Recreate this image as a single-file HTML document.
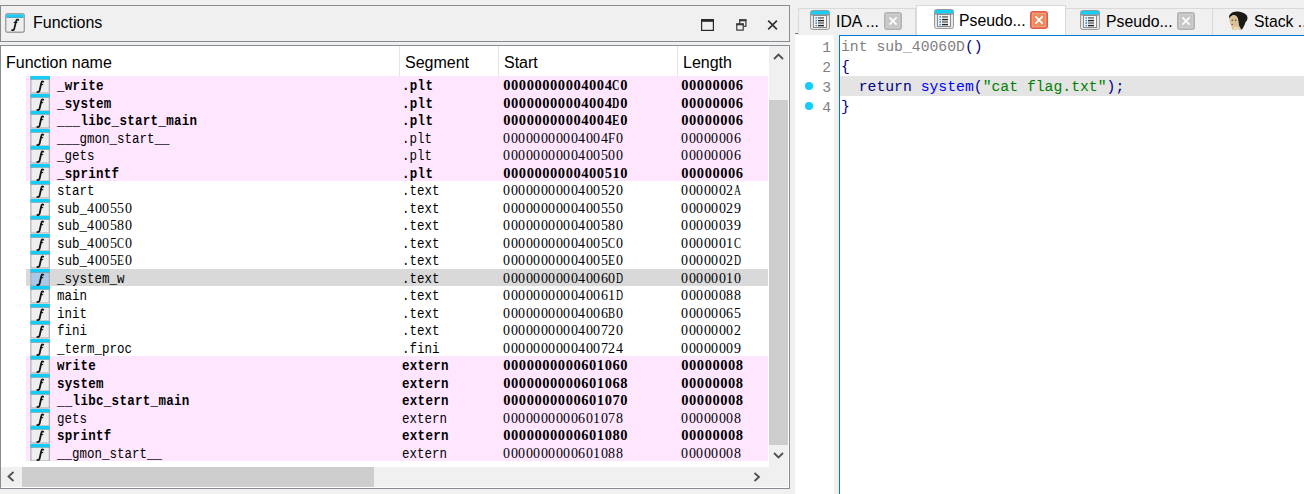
<!DOCTYPE html>
<html><head><meta charset="utf-8">
<style>
*{margin:0;padding:0;box-sizing:border-box}
html,body{width:1304px;height:494px;overflow:hidden;background:#f0f0f0;font-family:"Liberation Sans",sans-serif}
.abs{position:absolute}
#lp{position:absolute;left:0;top:5px;width:790px;height:37px;border:1px solid #878c93;background:#f0f0f0}
#lp .ttl{position:absolute;left:32px;top:8px;font-size:16px;color:#000}
#lst{position:absolute;left:0;top:45px;width:790px;height:444px;border:1px solid #878c93;background:#fff;overflow:hidden}
.hdr{position:absolute;top:0;height:30px;font-size:16px;color:#000;padding-left:5px;line-height:33px}
.sep{position:absolute;top:0;width:1px;height:30px;background:#e5e5e5}
.row{position:absolute;left:26px;width:742px;height:17.5px;font-family:"Liberation Serif",serif;font-size:14.5px;color:#000}
.row i{display:inline-block;width:7.5px;text-align:center;font-style:normal;transform-origin:0 0}
.bd i{width:7.8px}
.row u{display:inline-block;text-decoration:none;font-family:"Liberation Mono",monospace;font-size:12.5px;transform:scaleY(1.1);transform-origin:0 12.5px}
.bd u{letter-spacing:0.3px}
.row span{position:absolute;top:1px;line-height:17.5px;white-space:pre}
.pk{background:#ffe6ff}
.sel{background:#d9d9d9}
.bd{font-weight:bold}

.fi{position:absolute;left:4px;top:0}
.c1{left:31px}.c2{left:376px}.c3{left:477px}.c4{left:655px}
#vs{position:absolute;left:768px;top:0;width:19px;height:415px;background:#f0f0f0}
#hs{position:absolute;left:0;top:421px;width:768px;height:20px;background:#f0f0f0}
#corner{position:absolute;left:768px;top:415px;width:19px;height:26px;background:#f0f0f0}
#rp{position:absolute;left:795px;top:35px;width:509px;height:459px;background:#fff}
#gut{position:absolute;left:0;top:0;width:39px;height:459px;background:#fff}
#gap{position:absolute;left:39px;top:0;width:5px;height:459px;background:#f0f0f0}
#ed{position:absolute;left:44px;top:0;width:465px;height:459px;border:1px solid #0078d7;border-right:none;border-bottom:none;background:#fff}
.ln{position:absolute;right:3px;font-family:"Liberation Mono",monospace;font-size:14.75px;color:#808080;line-height:20px}
.cl{position:absolute;left:1px;margin-top:1px;font-family:"Liberation Mono",monospace;font-size:14.75px;line-height:20px;white-space:pre}
.dot{position:absolute;left:10px;width:8px;height:8px;border-radius:50%;background:#14ccfa}
.tt{font-size:15.75px;color:#000;white-space:nowrap}
.tab{position:absolute;top:8px;height:27px;font-size:15.5px;border:1px solid #d9d9d9;border-bottom:none;background:#f0f0f0}
</style></head><body>
<div id="lp">
  <svg class="abs" style="left:4px;top:7px" width="20" height="20" viewBox="0 0 20 20"><rect x="0.7" y="0.7" width="18.6" height="18.6" rx="2" fill="#eeeeee" stroke="#a0a0a0" stroke-width="1.4"/><rect x="1.4" y="1.4" width="17.2" height="3" fill="#14cdf6"/><rect x="1.4" y="4.4" width="17.2" height="0.6" fill="#2a8aa5"/><path d="M13.4 6.9C12.7 6.2 11.5 6.5 11.1 8.1L9.3 15.6C9 16.9 8.2 17.5 7 17.1" fill="none" stroke="#141414" stroke-width="1.7" stroke-linecap="round"/><path d="M8.7 9.4L12.4 9.4" stroke="#141414" stroke-width="1.1"/></svg>
  <div class="ttl">Functions</div>
  <svg class="abs" style="left:700px;top:12.5px" width="13" height="12" viewBox="0 0 13 12"><rect x="0.6" y="0.6" width="11.8" height="10.8" fill="none" stroke="#2a2a2a" stroke-width="1.2"/><rect x="0" y="0" width="13" height="2.8" fill="#2a2a2a"/></svg>
  <svg class="abs" style="left:735px;top:12.5px" width="11" height="12" viewBox="0 0 11 12"><rect x="3.7" y="0.9" width="6.2" height="6.4" fill="none" stroke="#3a3a3a" stroke-width="1.2"/><rect x="3.1" y="0.3" width="7.4" height="2" fill="#3a3a3a"/><rect x="0.8" y="5" width="6.4" height="6.1" fill="#f0f0f0" stroke="#3a3a3a" stroke-width="1.2"/><rect x="0.2" y="4.4" width="7.6" height="1.9" fill="#3a3a3a"/></svg>
  <svg class="abs" style="left:766px;top:14px" width="11" height="10" viewBox="0 0 11 10"><path d="M1.2 0.6L9.9 9.4M9.9 0.6L1.2 9.4" stroke="#333" stroke-width="1.7"/></svg>
</div>
<div id="lst">
  <div class="hdr" style="left:0;width:399px">Function name</div>
  <div class="sep" style="left:398px"></div>
  <div class="hdr" style="left:399px;width:99px">Segment</div>
  <div class="sep" style="left:497px"></div>
  <div class="hdr" style="left:498px;width:179px">Start</div>
  <div class="sep" style="left:676px"></div>
  <div class="hdr" style="left:677px;width:91px">Length</div>
  <div style="position:absolute;top:-46px;left:-1px">
<div class="row pk bd" style="top:76.0px"><svg class="fi" width="20" height="17.5" viewBox="0 0 20 17.5"><rect x="0.4" y="0" width="19.4" height="17.5" fill="#a4a4a4"/><rect x="1.4" y="3.4" width="17.4" height="13.1" fill="#eeeeee"/><rect x="0.4" y="0" width="19.4" height="3" fill="#14cdf6"/><rect x="0.4" y="3" width="19.4" height="0.5" fill="#3a9ab5"/><path d="M13.2 5.7C12.5 5 11.6 5.4 11.3 7L9.6 14.5C9.3 15.7 8.5 16.4 7.3 16" fill="none" stroke="#141414" stroke-width="1.8" stroke-linecap="round"/><path d="M10.2 8.6L13.2 8.6" stroke="#141414" stroke-width="1.1"/></svg><span class="c1"><u>_write</u></span><span class="c2"><u>.plt</u></span><span class="c3"><i>0</i><i>0</i><i>0</i><i>0</i><i>0</i><i>0</i><i>0</i><i>0</i><i>0</i><i>0</i><i>4</i><i>0</i><i>0</i><i>4</i><i style="transform:scaleX(0.697)">C</i><i>0</i></span><span class="c4"><i>0</i><i>0</i><i>0</i><i>0</i><i>0</i><i>0</i><i>0</i><i>6</i></span></div>
<div class="row pk bd" style="top:93.5px"><svg class="fi" width="20" height="17.5" viewBox="0 0 20 17.5"><rect x="0.4" y="0" width="19.4" height="17.5" fill="#a4a4a4"/><rect x="1.4" y="3.4" width="17.4" height="13.1" fill="#eeeeee"/><rect x="0.4" y="0" width="19.4" height="3" fill="#14cdf6"/><rect x="0.4" y="3" width="19.4" height="0.5" fill="#3a9ab5"/><path d="M13.2 5.7C12.5 5 11.6 5.4 11.3 7L9.6 14.5C9.3 15.7 8.5 16.4 7.3 16" fill="none" stroke="#141414" stroke-width="1.8" stroke-linecap="round"/><path d="M10.2 8.6L13.2 8.6" stroke="#141414" stroke-width="1.1"/></svg><span class="c1"><u>_system</u></span><span class="c2"><u>.plt</u></span><span class="c3"><i>0</i><i>0</i><i>0</i><i>0</i><i>0</i><i>0</i><i>0</i><i>0</i><i>0</i><i>0</i><i>4</i><i>0</i><i>0</i><i>4</i><i style="transform:scaleX(0.697)">D</i><i>0</i></span><span class="c4"><i>0</i><i>0</i><i>0</i><i>0</i><i>0</i><i>0</i><i>0</i><i>6</i></span></div>
<div class="row pk bd" style="top:111.0px"><svg class="fi" width="20" height="17.5" viewBox="0 0 20 17.5"><rect x="0.4" y="0" width="19.4" height="17.5" fill="#a4a4a4"/><rect x="1.4" y="3.4" width="17.4" height="13.1" fill="#eeeeee"/><rect x="0.4" y="0" width="19.4" height="3" fill="#14cdf6"/><rect x="0.4" y="3" width="19.4" height="0.5" fill="#3a9ab5"/><path d="M13.2 5.7C12.5 5 11.6 5.4 11.3 7L9.6 14.5C9.3 15.7 8.5 16.4 7.3 16" fill="none" stroke="#141414" stroke-width="1.8" stroke-linecap="round"/><path d="M10.2 8.6L13.2 8.6" stroke="#141414" stroke-width="1.1"/></svg><span class="c1"><u>___libc_start_main</u></span><span class="c2"><u>.plt</u></span><span class="c3"><i>0</i><i>0</i><i>0</i><i>0</i><i>0</i><i>0</i><i>0</i><i>0</i><i>0</i><i>0</i><i>4</i><i>0</i><i>0</i><i>4</i><i style="transform:scaleX(0.755)">E</i><i>0</i></span><span class="c4"><i>0</i><i>0</i><i>0</i><i>0</i><i>0</i><i>0</i><i>0</i><i>6</i></span></div>
<div class="row pk" style="top:128.5px"><svg class="fi" width="20" height="17.5" viewBox="0 0 20 17.5"><rect x="0.4" y="0" width="19.4" height="17.5" fill="#a4a4a4"/><rect x="1.4" y="3.4" width="17.4" height="13.1" fill="#eeeeee"/><rect x="0.4" y="0" width="19.4" height="3" fill="#14cdf6"/><rect x="0.4" y="3" width="19.4" height="0.5" fill="#3a9ab5"/><path d="M13.2 5.7C12.5 5 11.6 5.4 11.3 7L9.6 14.5C9.3 15.7 8.5 16.4 7.3 16" fill="none" stroke="#141414" stroke-width="1.8" stroke-linecap="round"/><path d="M10.2 8.6L13.2 8.6" stroke="#141414" stroke-width="1.1"/></svg><span class="c1"><u>___gmon_start__</u></span><span class="c2"><u>.plt</u></span><span class="c3"><i style="transform:scaleX(0.966)">0</i><i style="transform:scaleX(0.966)">0</i><i style="transform:scaleX(0.966)">0</i><i style="transform:scaleX(0.966)">0</i><i style="transform:scaleX(0.966)">0</i><i style="transform:scaleX(0.966)">0</i><i style="transform:scaleX(0.966)">0</i><i style="transform:scaleX(0.966)">0</i><i style="transform:scaleX(0.966)">0</i><i style="transform:scaleX(0.966)">0</i><i style="transform:scaleX(0.966)">4</i><i style="transform:scaleX(0.966)">0</i><i style="transform:scaleX(0.966)">0</i><i style="transform:scaleX(0.966)">4</i><i style="transform:scaleX(0.868)">F</i><i style="transform:scaleX(0.966)">0</i></span><span class="c4"><i style="transform:scaleX(0.966)">0</i><i style="transform:scaleX(0.966)">0</i><i style="transform:scaleX(0.966)">0</i><i style="transform:scaleX(0.966)">0</i><i style="transform:scaleX(0.966)">0</i><i style="transform:scaleX(0.966)">0</i><i style="transform:scaleX(0.966)">0</i><i style="transform:scaleX(0.966)">6</i></span></div>
<div class="row pk" style="top:146.0px"><svg class="fi" width="20" height="17.5" viewBox="0 0 20 17.5"><rect x="0.4" y="0" width="19.4" height="17.5" fill="#a4a4a4"/><rect x="1.4" y="3.4" width="17.4" height="13.1" fill="#eeeeee"/><rect x="0.4" y="0" width="19.4" height="3" fill="#14cdf6"/><rect x="0.4" y="3" width="19.4" height="0.5" fill="#3a9ab5"/><path d="M13.2 5.7C12.5 5 11.6 5.4 11.3 7L9.6 14.5C9.3 15.7 8.5 16.4 7.3 16" fill="none" stroke="#141414" stroke-width="1.8" stroke-linecap="round"/><path d="M10.2 8.6L13.2 8.6" stroke="#141414" stroke-width="1.1"/></svg><span class="c1"><u>_gets</u></span><span class="c2"><u>.plt</u></span><span class="c3"><i style="transform:scaleX(0.966)">0</i><i style="transform:scaleX(0.966)">0</i><i style="transform:scaleX(0.966)">0</i><i style="transform:scaleX(0.966)">0</i><i style="transform:scaleX(0.966)">0</i><i style="transform:scaleX(0.966)">0</i><i style="transform:scaleX(0.966)">0</i><i style="transform:scaleX(0.966)">0</i><i style="transform:scaleX(0.966)">0</i><i style="transform:scaleX(0.966)">0</i><i style="transform:scaleX(0.966)">4</i><i style="transform:scaleX(0.966)">0</i><i style="transform:scaleX(0.966)">0</i><i style="transform:scaleX(0.966)">5</i><i style="transform:scaleX(0.966)">0</i><i style="transform:scaleX(0.966)">0</i></span><span class="c4"><i style="transform:scaleX(0.966)">0</i><i style="transform:scaleX(0.966)">0</i><i style="transform:scaleX(0.966)">0</i><i style="transform:scaleX(0.966)">0</i><i style="transform:scaleX(0.966)">0</i><i style="transform:scaleX(0.966)">0</i><i style="transform:scaleX(0.966)">0</i><i style="transform:scaleX(0.966)">6</i></span></div>
<div class="row pk bd" style="top:163.5px"><svg class="fi" width="20" height="17.5" viewBox="0 0 20 17.5"><rect x="0.4" y="0" width="19.4" height="17.5" fill="#a4a4a4"/><rect x="1.4" y="3.4" width="17.4" height="13.1" fill="#eeeeee"/><rect x="0.4" y="0" width="19.4" height="3" fill="#14cdf6"/><rect x="0.4" y="3" width="19.4" height="0.5" fill="#3a9ab5"/><path d="M13.2 5.7C12.5 5 11.6 5.4 11.3 7L9.6 14.5C9.3 15.7 8.5 16.4 7.3 16" fill="none" stroke="#141414" stroke-width="1.8" stroke-linecap="round"/><path d="M10.2 8.6L13.2 8.6" stroke="#141414" stroke-width="1.1"/></svg><span class="c1"><u>_sprintf</u></span><span class="c2"><u>.plt</u></span><span class="c3"><i>0</i><i>0</i><i>0</i><i>0</i><i>0</i><i>0</i><i>0</i><i>0</i><i>0</i><i>0</i><i>4</i><i>0</i><i>0</i><i>5</i><i>1</i><i>0</i></span><span class="c4"><i>0</i><i>0</i><i>0</i><i>0</i><i>0</i><i>0</i><i>0</i><i>6</i></span></div>
<div class="row wh" style="top:181.0px"><svg class="fi" width="20" height="17.5" viewBox="0 0 20 17.5"><rect x="0.4" y="0" width="19.4" height="17.5" fill="#a4a4a4"/><rect x="1.4" y="3.4" width="17.4" height="13.1" fill="#eeeeee"/><rect x="0.4" y="0" width="19.4" height="3" fill="#14cdf6"/><rect x="0.4" y="3" width="19.4" height="0.5" fill="#3a9ab5"/><path d="M13.2 5.7C12.5 5 11.6 5.4 11.3 7L9.6 14.5C9.3 15.7 8.5 16.4 7.3 16" fill="none" stroke="#141414" stroke-width="1.8" stroke-linecap="round"/><path d="M10.2 8.6L13.2 8.6" stroke="#141414" stroke-width="1.1"/></svg><span class="c1"><u>start</u></span><span class="c2"><u>.text</u></span><span class="c3"><i style="transform:scaleX(0.966)">0</i><i style="transform:scaleX(0.966)">0</i><i style="transform:scaleX(0.966)">0</i><i style="transform:scaleX(0.966)">0</i><i style="transform:scaleX(0.966)">0</i><i style="transform:scaleX(0.966)">0</i><i style="transform:scaleX(0.966)">0</i><i style="transform:scaleX(0.966)">0</i><i style="transform:scaleX(0.966)">0</i><i style="transform:scaleX(0.966)">0</i><i style="transform:scaleX(0.966)">4</i><i style="transform:scaleX(0.966)">0</i><i style="transform:scaleX(0.966)">0</i><i style="transform:scaleX(0.966)">5</i><i style="transform:scaleX(0.966)">2</i><i style="transform:scaleX(0.966)">0</i></span><span class="c4"><i style="transform:scaleX(0.966)">0</i><i style="transform:scaleX(0.966)">0</i><i style="transform:scaleX(0.966)">0</i><i style="transform:scaleX(0.966)">0</i><i style="transform:scaleX(0.966)">0</i><i style="transform:scaleX(0.966)">0</i><i style="transform:scaleX(0.966)">2</i><i style="transform:scaleX(0.668)">A</i></span></div>
<div class="row wh" style="top:198.5px"><svg class="fi" width="20" height="17.5" viewBox="0 0 20 17.5"><rect x="0.4" y="0" width="19.4" height="17.5" fill="#a4a4a4"/><rect x="1.4" y="3.4" width="17.4" height="13.1" fill="#eeeeee"/><rect x="0.4" y="0" width="19.4" height="3" fill="#14cdf6"/><rect x="0.4" y="3" width="19.4" height="0.5" fill="#3a9ab5"/><path d="M13.2 5.7C12.5 5 11.6 5.4 11.3 7L9.6 14.5C9.3 15.7 8.5 16.4 7.3 16" fill="none" stroke="#141414" stroke-width="1.8" stroke-linecap="round"/><path d="M10.2 8.6L13.2 8.6" stroke="#141414" stroke-width="1.1"/></svg><span class="c1"><u>sub_</u><i style="transform:scaleX(0.966)">4</i><i style="transform:scaleX(0.966)">0</i><i style="transform:scaleX(0.966)">0</i><i style="transform:scaleX(0.966)">5</i><i style="transform:scaleX(0.966)">5</i><i style="transform:scaleX(0.966)">0</i></span><span class="c2"><u>.text</u></span><span class="c3"><i style="transform:scaleX(0.966)">0</i><i style="transform:scaleX(0.966)">0</i><i style="transform:scaleX(0.966)">0</i><i style="transform:scaleX(0.966)">0</i><i style="transform:scaleX(0.966)">0</i><i style="transform:scaleX(0.966)">0</i><i style="transform:scaleX(0.966)">0</i><i style="transform:scaleX(0.966)">0</i><i style="transform:scaleX(0.966)">0</i><i style="transform:scaleX(0.966)">0</i><i style="transform:scaleX(0.966)">4</i><i style="transform:scaleX(0.966)">0</i><i style="transform:scaleX(0.966)">0</i><i style="transform:scaleX(0.966)">5</i><i style="transform:scaleX(0.966)">5</i><i style="transform:scaleX(0.966)">0</i></span><span class="c4"><i style="transform:scaleX(0.966)">0</i><i style="transform:scaleX(0.966)">0</i><i style="transform:scaleX(0.966)">0</i><i style="transform:scaleX(0.966)">0</i><i style="transform:scaleX(0.966)">0</i><i style="transform:scaleX(0.966)">0</i><i style="transform:scaleX(0.966)">2</i><i style="transform:scaleX(0.966)">9</i></span></div>
<div class="row wh" style="top:216.0px"><svg class="fi" width="20" height="17.5" viewBox="0 0 20 17.5"><rect x="0.4" y="0" width="19.4" height="17.5" fill="#a4a4a4"/><rect x="1.4" y="3.4" width="17.4" height="13.1" fill="#eeeeee"/><rect x="0.4" y="0" width="19.4" height="3" fill="#14cdf6"/><rect x="0.4" y="3" width="19.4" height="0.5" fill="#3a9ab5"/><path d="M13.2 5.7C12.5 5 11.6 5.4 11.3 7L9.6 14.5C9.3 15.7 8.5 16.4 7.3 16" fill="none" stroke="#141414" stroke-width="1.8" stroke-linecap="round"/><path d="M10.2 8.6L13.2 8.6" stroke="#141414" stroke-width="1.1"/></svg><span class="c1"><u>sub_</u><i style="transform:scaleX(0.966)">4</i><i style="transform:scaleX(0.966)">0</i><i style="transform:scaleX(0.966)">0</i><i style="transform:scaleX(0.966)">5</i><i style="transform:scaleX(0.966)">8</i><i style="transform:scaleX(0.966)">0</i></span><span class="c2"><u>.text</u></span><span class="c3"><i style="transform:scaleX(0.966)">0</i><i style="transform:scaleX(0.966)">0</i><i style="transform:scaleX(0.966)">0</i><i style="transform:scaleX(0.966)">0</i><i style="transform:scaleX(0.966)">0</i><i style="transform:scaleX(0.966)">0</i><i style="transform:scaleX(0.966)">0</i><i style="transform:scaleX(0.966)">0</i><i style="transform:scaleX(0.966)">0</i><i style="transform:scaleX(0.966)">0</i><i style="transform:scaleX(0.966)">4</i><i style="transform:scaleX(0.966)">0</i><i style="transform:scaleX(0.966)">0</i><i style="transform:scaleX(0.966)">5</i><i style="transform:scaleX(0.966)">8</i><i style="transform:scaleX(0.966)">0</i></span><span class="c4"><i style="transform:scaleX(0.966)">0</i><i style="transform:scaleX(0.966)">0</i><i style="transform:scaleX(0.966)">0</i><i style="transform:scaleX(0.966)">0</i><i style="transform:scaleX(0.966)">0</i><i style="transform:scaleX(0.966)">0</i><i style="transform:scaleX(0.966)">3</i><i style="transform:scaleX(0.966)">9</i></span></div>
<div class="row wh" style="top:233.5px"><svg class="fi" width="20" height="17.5" viewBox="0 0 20 17.5"><rect x="0.4" y="0" width="19.4" height="17.5" fill="#a4a4a4"/><rect x="1.4" y="3.4" width="17.4" height="13.1" fill="#eeeeee"/><rect x="0.4" y="0" width="19.4" height="3" fill="#14cdf6"/><rect x="0.4" y="3" width="19.4" height="0.5" fill="#3a9ab5"/><path d="M13.2 5.7C12.5 5 11.6 5.4 11.3 7L9.6 14.5C9.3 15.7 8.5 16.4 7.3 16" fill="none" stroke="#141414" stroke-width="1.8" stroke-linecap="round"/><path d="M10.2 8.6L13.2 8.6" stroke="#141414" stroke-width="1.1"/></svg><span class="c1"><u>sub_</u><i style="transform:scaleX(0.966)">4</i><i style="transform:scaleX(0.966)">0</i><i style="transform:scaleX(0.966)">0</i><i style="transform:scaleX(0.966)">5</i><i style="transform:scaleX(0.724)">C</i><i style="transform:scaleX(0.966)">0</i></span><span class="c2"><u>.text</u></span><span class="c3"><i style="transform:scaleX(0.966)">0</i><i style="transform:scaleX(0.966)">0</i><i style="transform:scaleX(0.966)">0</i><i style="transform:scaleX(0.966)">0</i><i style="transform:scaleX(0.966)">0</i><i style="transform:scaleX(0.966)">0</i><i style="transform:scaleX(0.966)">0</i><i style="transform:scaleX(0.966)">0</i><i style="transform:scaleX(0.966)">0</i><i style="transform:scaleX(0.966)">0</i><i style="transform:scaleX(0.966)">4</i><i style="transform:scaleX(0.966)">0</i><i style="transform:scaleX(0.966)">0</i><i style="transform:scaleX(0.966)">5</i><i style="transform:scaleX(0.724)">C</i><i style="transform:scaleX(0.966)">0</i></span><span class="c4"><i style="transform:scaleX(0.966)">0</i><i style="transform:scaleX(0.966)">0</i><i style="transform:scaleX(0.966)">0</i><i style="transform:scaleX(0.966)">0</i><i style="transform:scaleX(0.966)">0</i><i style="transform:scaleX(0.966)">0</i><i style="transform:scaleX(0.966)">1</i><i style="transform:scaleX(0.724)">C</i></span></div>
<div class="row wh" style="top:251.0px"><svg class="fi" width="20" height="17.5" viewBox="0 0 20 17.5"><rect x="0.4" y="0" width="19.4" height="17.5" fill="#a4a4a4"/><rect x="1.4" y="3.4" width="17.4" height="13.1" fill="#eeeeee"/><rect x="0.4" y="0" width="19.4" height="3" fill="#14cdf6"/><rect x="0.4" y="3" width="19.4" height="0.5" fill="#3a9ab5"/><path d="M13.2 5.7C12.5 5 11.6 5.4 11.3 7L9.6 14.5C9.3 15.7 8.5 16.4 7.3 16" fill="none" stroke="#141414" stroke-width="1.8" stroke-linecap="round"/><path d="M10.2 8.6L13.2 8.6" stroke="#141414" stroke-width="1.1"/></svg><span class="c1"><u>sub_</u><i style="transform:scaleX(0.966)">4</i><i style="transform:scaleX(0.966)">0</i><i style="transform:scaleX(0.966)">0</i><i style="transform:scaleX(0.966)">5</i><i style="transform:scaleX(0.790)">E</i><i style="transform:scaleX(0.966)">0</i></span><span class="c2"><u>.text</u></span><span class="c3"><i style="transform:scaleX(0.966)">0</i><i style="transform:scaleX(0.966)">0</i><i style="transform:scaleX(0.966)">0</i><i style="transform:scaleX(0.966)">0</i><i style="transform:scaleX(0.966)">0</i><i style="transform:scaleX(0.966)">0</i><i style="transform:scaleX(0.966)">0</i><i style="transform:scaleX(0.966)">0</i><i style="transform:scaleX(0.966)">0</i><i style="transform:scaleX(0.966)">0</i><i style="transform:scaleX(0.966)">4</i><i style="transform:scaleX(0.966)">0</i><i style="transform:scaleX(0.966)">0</i><i style="transform:scaleX(0.966)">5</i><i style="transform:scaleX(0.790)">E</i><i style="transform:scaleX(0.966)">0</i></span><span class="c4"><i style="transform:scaleX(0.966)">0</i><i style="transform:scaleX(0.966)">0</i><i style="transform:scaleX(0.966)">0</i><i style="transform:scaleX(0.966)">0</i><i style="transform:scaleX(0.966)">0</i><i style="transform:scaleX(0.966)">0</i><i style="transform:scaleX(0.966)">2</i><i style="transform:scaleX(0.668)">D</i></span></div>
<div class="row sel" style="top:268.5px"><svg class="fi" width="20" height="17.5" viewBox="0 0 20 17.5"><rect x="0.4" y="0" width="19.4" height="17.5" fill="#a4a4a4"/><rect x="1.4" y="3.4" width="17.4" height="13.1" fill="#a9c9ea"/><rect x="0.4" y="0" width="19.4" height="3" fill="#14cdf6"/><rect x="0.4" y="3" width="19.4" height="0.5" fill="#3a9ab5"/><path d="M13.2 5.7C12.5 5 11.6 5.4 11.3 7L9.6 14.5C9.3 15.7 8.5 16.4 7.3 16" fill="none" stroke="#141414" stroke-width="1.8" stroke-linecap="round"/><path d="M10.2 8.6L13.2 8.6" stroke="#141414" stroke-width="1.1"/></svg><span class="c1"><u>_system_w</u></span><span class="c2"><u>.text</u></span><span class="c3"><i style="transform:scaleX(0.966)">0</i><i style="transform:scaleX(0.966)">0</i><i style="transform:scaleX(0.966)">0</i><i style="transform:scaleX(0.966)">0</i><i style="transform:scaleX(0.966)">0</i><i style="transform:scaleX(0.966)">0</i><i style="transform:scaleX(0.966)">0</i><i style="transform:scaleX(0.966)">0</i><i style="transform:scaleX(0.966)">0</i><i style="transform:scaleX(0.966)">0</i><i style="transform:scaleX(0.966)">4</i><i style="transform:scaleX(0.966)">0</i><i style="transform:scaleX(0.966)">0</i><i style="transform:scaleX(0.966)">6</i><i style="transform:scaleX(0.966)">0</i><i style="transform:scaleX(0.668)">D</i></span><span class="c4"><i style="transform:scaleX(0.966)">0</i><i style="transform:scaleX(0.966)">0</i><i style="transform:scaleX(0.966)">0</i><i style="transform:scaleX(0.966)">0</i><i style="transform:scaleX(0.966)">0</i><i style="transform:scaleX(0.966)">0</i><i style="transform:scaleX(0.966)">1</i><i style="transform:scaleX(0.966)">0</i></span></div>
<div class="row wh" style="top:286.0px"><svg class="fi" width="20" height="17.5" viewBox="0 0 20 17.5"><rect x="0.4" y="0" width="19.4" height="17.5" fill="#a4a4a4"/><rect x="1.4" y="3.4" width="17.4" height="13.1" fill="#eeeeee"/><rect x="0.4" y="0" width="19.4" height="3" fill="#14cdf6"/><rect x="0.4" y="3" width="19.4" height="0.5" fill="#3a9ab5"/><path d="M13.2 5.7C12.5 5 11.6 5.4 11.3 7L9.6 14.5C9.3 15.7 8.5 16.4 7.3 16" fill="none" stroke="#141414" stroke-width="1.8" stroke-linecap="round"/><path d="M10.2 8.6L13.2 8.6" stroke="#141414" stroke-width="1.1"/></svg><span class="c1"><u>main</u></span><span class="c2"><u>.text</u></span><span class="c3"><i style="transform:scaleX(0.966)">0</i><i style="transform:scaleX(0.966)">0</i><i style="transform:scaleX(0.966)">0</i><i style="transform:scaleX(0.966)">0</i><i style="transform:scaleX(0.966)">0</i><i style="transform:scaleX(0.966)">0</i><i style="transform:scaleX(0.966)">0</i><i style="transform:scaleX(0.966)">0</i><i style="transform:scaleX(0.966)">0</i><i style="transform:scaleX(0.966)">0</i><i style="transform:scaleX(0.966)">4</i><i style="transform:scaleX(0.966)">0</i><i style="transform:scaleX(0.966)">0</i><i style="transform:scaleX(0.966)">6</i><i style="transform:scaleX(0.966)">1</i><i style="transform:scaleX(0.668)">D</i></span><span class="c4"><i style="transform:scaleX(0.966)">0</i><i style="transform:scaleX(0.966)">0</i><i style="transform:scaleX(0.966)">0</i><i style="transform:scaleX(0.966)">0</i><i style="transform:scaleX(0.966)">0</i><i style="transform:scaleX(0.966)">0</i><i style="transform:scaleX(0.966)">8</i><i style="transform:scaleX(0.966)">8</i></span></div>
<div class="row wh" style="top:303.5px"><svg class="fi" width="20" height="17.5" viewBox="0 0 20 17.5"><rect x="0.4" y="0" width="19.4" height="17.5" fill="#a4a4a4"/><rect x="1.4" y="3.4" width="17.4" height="13.1" fill="#eeeeee"/><rect x="0.4" y="0" width="19.4" height="3" fill="#14cdf6"/><rect x="0.4" y="3" width="19.4" height="0.5" fill="#3a9ab5"/><path d="M13.2 5.7C12.5 5 11.6 5.4 11.3 7L9.6 14.5C9.3 15.7 8.5 16.4 7.3 16" fill="none" stroke="#141414" stroke-width="1.8" stroke-linecap="round"/><path d="M10.2 8.6L13.2 8.6" stroke="#141414" stroke-width="1.1"/></svg><span class="c1"><u>init</u></span><span class="c2"><u>.text</u></span><span class="c3"><i style="transform:scaleX(0.966)">0</i><i style="transform:scaleX(0.966)">0</i><i style="transform:scaleX(0.966)">0</i><i style="transform:scaleX(0.966)">0</i><i style="transform:scaleX(0.966)">0</i><i style="transform:scaleX(0.966)">0</i><i style="transform:scaleX(0.966)">0</i><i style="transform:scaleX(0.966)">0</i><i style="transform:scaleX(0.966)">0</i><i style="transform:scaleX(0.966)">0</i><i style="transform:scaleX(0.966)">4</i><i style="transform:scaleX(0.966)">0</i><i style="transform:scaleX(0.966)">0</i><i style="transform:scaleX(0.966)">6</i><i style="transform:scaleX(0.724)">B</i><i style="transform:scaleX(0.966)">0</i></span><span class="c4"><i style="transform:scaleX(0.966)">0</i><i style="transform:scaleX(0.966)">0</i><i style="transform:scaleX(0.966)">0</i><i style="transform:scaleX(0.966)">0</i><i style="transform:scaleX(0.966)">0</i><i style="transform:scaleX(0.966)">0</i><i style="transform:scaleX(0.966)">6</i><i style="transform:scaleX(0.966)">5</i></span></div>
<div class="row wh" style="top:321.0px"><svg class="fi" width="20" height="17.5" viewBox="0 0 20 17.5"><rect x="0.4" y="0" width="19.4" height="17.5" fill="#a4a4a4"/><rect x="1.4" y="3.4" width="17.4" height="13.1" fill="#eeeeee"/><rect x="0.4" y="0" width="19.4" height="3" fill="#14cdf6"/><rect x="0.4" y="3" width="19.4" height="0.5" fill="#3a9ab5"/><path d="M13.2 5.7C12.5 5 11.6 5.4 11.3 7L9.6 14.5C9.3 15.7 8.5 16.4 7.3 16" fill="none" stroke="#141414" stroke-width="1.8" stroke-linecap="round"/><path d="M10.2 8.6L13.2 8.6" stroke="#141414" stroke-width="1.1"/></svg><span class="c1"><u>fini</u></span><span class="c2"><u>.text</u></span><span class="c3"><i style="transform:scaleX(0.966)">0</i><i style="transform:scaleX(0.966)">0</i><i style="transform:scaleX(0.966)">0</i><i style="transform:scaleX(0.966)">0</i><i style="transform:scaleX(0.966)">0</i><i style="transform:scaleX(0.966)">0</i><i style="transform:scaleX(0.966)">0</i><i style="transform:scaleX(0.966)">0</i><i style="transform:scaleX(0.966)">0</i><i style="transform:scaleX(0.966)">0</i><i style="transform:scaleX(0.966)">4</i><i style="transform:scaleX(0.966)">0</i><i style="transform:scaleX(0.966)">0</i><i style="transform:scaleX(0.966)">7</i><i style="transform:scaleX(0.966)">2</i><i style="transform:scaleX(0.966)">0</i></span><span class="c4"><i style="transform:scaleX(0.966)">0</i><i style="transform:scaleX(0.966)">0</i><i style="transform:scaleX(0.966)">0</i><i style="transform:scaleX(0.966)">0</i><i style="transform:scaleX(0.966)">0</i><i style="transform:scaleX(0.966)">0</i><i style="transform:scaleX(0.966)">0</i><i style="transform:scaleX(0.966)">2</i></span></div>
<div class="row wh" style="top:338.5px"><svg class="fi" width="20" height="17.5" viewBox="0 0 20 17.5"><rect x="0.4" y="0" width="19.4" height="17.5" fill="#a4a4a4"/><rect x="1.4" y="3.4" width="17.4" height="13.1" fill="#eeeeee"/><rect x="0.4" y="0" width="19.4" height="3" fill="#14cdf6"/><rect x="0.4" y="3" width="19.4" height="0.5" fill="#3a9ab5"/><path d="M13.2 5.7C12.5 5 11.6 5.4 11.3 7L9.6 14.5C9.3 15.7 8.5 16.4 7.3 16" fill="none" stroke="#141414" stroke-width="1.8" stroke-linecap="round"/><path d="M10.2 8.6L13.2 8.6" stroke="#141414" stroke-width="1.1"/></svg><span class="c1"><u>_term_proc</u></span><span class="c2"><u>.fini</u></span><span class="c3"><i style="transform:scaleX(0.966)">0</i><i style="transform:scaleX(0.966)">0</i><i style="transform:scaleX(0.966)">0</i><i style="transform:scaleX(0.966)">0</i><i style="transform:scaleX(0.966)">0</i><i style="transform:scaleX(0.966)">0</i><i style="transform:scaleX(0.966)">0</i><i style="transform:scaleX(0.966)">0</i><i style="transform:scaleX(0.966)">0</i><i style="transform:scaleX(0.966)">0</i><i style="transform:scaleX(0.966)">4</i><i style="transform:scaleX(0.966)">0</i><i style="transform:scaleX(0.966)">0</i><i style="transform:scaleX(0.966)">7</i><i style="transform:scaleX(0.966)">2</i><i style="transform:scaleX(0.966)">4</i></span><span class="c4"><i style="transform:scaleX(0.966)">0</i><i style="transform:scaleX(0.966)">0</i><i style="transform:scaleX(0.966)">0</i><i style="transform:scaleX(0.966)">0</i><i style="transform:scaleX(0.966)">0</i><i style="transform:scaleX(0.966)">0</i><i style="transform:scaleX(0.966)">0</i><i style="transform:scaleX(0.966)">9</i></span></div>
<div class="row pk bd" style="top:356.0px"><svg class="fi" width="20" height="17.5" viewBox="0 0 20 17.5"><rect x="0.4" y="0" width="19.4" height="17.5" fill="#a4a4a4"/><rect x="1.4" y="3.4" width="17.4" height="13.1" fill="#eeeeee"/><rect x="0.4" y="0" width="19.4" height="3" fill="#14cdf6"/><rect x="0.4" y="3" width="19.4" height="0.5" fill="#3a9ab5"/><path d="M13.2 5.7C12.5 5 11.6 5.4 11.3 7L9.6 14.5C9.3 15.7 8.5 16.4 7.3 16" fill="none" stroke="#141414" stroke-width="1.8" stroke-linecap="round"/><path d="M10.2 8.6L13.2 8.6" stroke="#141414" stroke-width="1.1"/></svg><span class="c1"><u>write</u></span><span class="c2"><u>extern</u></span><span class="c3"><i>0</i><i>0</i><i>0</i><i>0</i><i>0</i><i>0</i><i>0</i><i>0</i><i>0</i><i>0</i><i>6</i><i>0</i><i>1</i><i>0</i><i>6</i><i>0</i></span><span class="c4"><i>0</i><i>0</i><i>0</i><i>0</i><i>0</i><i>0</i><i>0</i><i>8</i></span></div>
<div class="row pk bd" style="top:373.5px"><svg class="fi" width="20" height="17.5" viewBox="0 0 20 17.5"><rect x="0.4" y="0" width="19.4" height="17.5" fill="#a4a4a4"/><rect x="1.4" y="3.4" width="17.4" height="13.1" fill="#eeeeee"/><rect x="0.4" y="0" width="19.4" height="3" fill="#14cdf6"/><rect x="0.4" y="3" width="19.4" height="0.5" fill="#3a9ab5"/><path d="M13.2 5.7C12.5 5 11.6 5.4 11.3 7L9.6 14.5C9.3 15.7 8.5 16.4 7.3 16" fill="none" stroke="#141414" stroke-width="1.8" stroke-linecap="round"/><path d="M10.2 8.6L13.2 8.6" stroke="#141414" stroke-width="1.1"/></svg><span class="c1"><u>system</u></span><span class="c2"><u>extern</u></span><span class="c3"><i>0</i><i>0</i><i>0</i><i>0</i><i>0</i><i>0</i><i>0</i><i>0</i><i>0</i><i>0</i><i>6</i><i>0</i><i>1</i><i>0</i><i>6</i><i>8</i></span><span class="c4"><i>0</i><i>0</i><i>0</i><i>0</i><i>0</i><i>0</i><i>0</i><i>8</i></span></div>
<div class="row pk bd" style="top:391.0px"><svg class="fi" width="20" height="17.5" viewBox="0 0 20 17.5"><rect x="0.4" y="0" width="19.4" height="17.5" fill="#a4a4a4"/><rect x="1.4" y="3.4" width="17.4" height="13.1" fill="#eeeeee"/><rect x="0.4" y="0" width="19.4" height="3" fill="#14cdf6"/><rect x="0.4" y="3" width="19.4" height="0.5" fill="#3a9ab5"/><path d="M13.2 5.7C12.5 5 11.6 5.4 11.3 7L9.6 14.5C9.3 15.7 8.5 16.4 7.3 16" fill="none" stroke="#141414" stroke-width="1.8" stroke-linecap="round"/><path d="M10.2 8.6L13.2 8.6" stroke="#141414" stroke-width="1.1"/></svg><span class="c1"><u>__libc_start_main</u></span><span class="c2"><u>extern</u></span><span class="c3"><i>0</i><i>0</i><i>0</i><i>0</i><i>0</i><i>0</i><i>0</i><i>0</i><i>0</i><i>0</i><i>6</i><i>0</i><i>1</i><i>0</i><i>7</i><i>0</i></span><span class="c4"><i>0</i><i>0</i><i>0</i><i>0</i><i>0</i><i>0</i><i>0</i><i>8</i></span></div>
<div class="row pk" style="top:408.5px"><svg class="fi" width="20" height="17.5" viewBox="0 0 20 17.5"><rect x="0.4" y="0" width="19.4" height="17.5" fill="#a4a4a4"/><rect x="1.4" y="3.4" width="17.4" height="13.1" fill="#eeeeee"/><rect x="0.4" y="0" width="19.4" height="3" fill="#14cdf6"/><rect x="0.4" y="3" width="19.4" height="0.5" fill="#3a9ab5"/><path d="M13.2 5.7C12.5 5 11.6 5.4 11.3 7L9.6 14.5C9.3 15.7 8.5 16.4 7.3 16" fill="none" stroke="#141414" stroke-width="1.8" stroke-linecap="round"/><path d="M10.2 8.6L13.2 8.6" stroke="#141414" stroke-width="1.1"/></svg><span class="c1"><u>gets</u></span><span class="c2"><u>extern</u></span><span class="c3"><i style="transform:scaleX(0.966)">0</i><i style="transform:scaleX(0.966)">0</i><i style="transform:scaleX(0.966)">0</i><i style="transform:scaleX(0.966)">0</i><i style="transform:scaleX(0.966)">0</i><i style="transform:scaleX(0.966)">0</i><i style="transform:scaleX(0.966)">0</i><i style="transform:scaleX(0.966)">0</i><i style="transform:scaleX(0.966)">0</i><i style="transform:scaleX(0.966)">0</i><i style="transform:scaleX(0.966)">6</i><i style="transform:scaleX(0.966)">0</i><i style="transform:scaleX(0.966)">1</i><i style="transform:scaleX(0.966)">0</i><i style="transform:scaleX(0.966)">7</i><i style="transform:scaleX(0.966)">8</i></span><span class="c4"><i style="transform:scaleX(0.966)">0</i><i style="transform:scaleX(0.966)">0</i><i style="transform:scaleX(0.966)">0</i><i style="transform:scaleX(0.966)">0</i><i style="transform:scaleX(0.966)">0</i><i style="transform:scaleX(0.966)">0</i><i style="transform:scaleX(0.966)">0</i><i style="transform:scaleX(0.966)">8</i></span></div>
<div class="row pk bd" style="top:426.0px"><svg class="fi" width="20" height="17.5" viewBox="0 0 20 17.5"><rect x="0.4" y="0" width="19.4" height="17.5" fill="#a4a4a4"/><rect x="1.4" y="3.4" width="17.4" height="13.1" fill="#eeeeee"/><rect x="0.4" y="0" width="19.4" height="3" fill="#14cdf6"/><rect x="0.4" y="3" width="19.4" height="0.5" fill="#3a9ab5"/><path d="M13.2 5.7C12.5 5 11.6 5.4 11.3 7L9.6 14.5C9.3 15.7 8.5 16.4 7.3 16" fill="none" stroke="#141414" stroke-width="1.8" stroke-linecap="round"/><path d="M10.2 8.6L13.2 8.6" stroke="#141414" stroke-width="1.1"/></svg><span class="c1"><u>sprintf</u></span><span class="c2"><u>extern</u></span><span class="c3"><i>0</i><i>0</i><i>0</i><i>0</i><i>0</i><i>0</i><i>0</i><i>0</i><i>0</i><i>0</i><i>6</i><i>0</i><i>1</i><i>0</i><i>8</i><i>0</i></span><span class="c4"><i>0</i><i>0</i><i>0</i><i>0</i><i>0</i><i>0</i><i>0</i><i>8</i></span></div>
<div class="row pk" style="top:443.5px"><svg class="fi" width="20" height="17.5" viewBox="0 0 20 17.5"><rect x="0.4" y="0" width="19.4" height="17.5" fill="#a4a4a4"/><rect x="1.4" y="3.4" width="17.4" height="13.1" fill="#eeeeee"/><rect x="0.4" y="0" width="19.4" height="3" fill="#14cdf6"/><rect x="0.4" y="3" width="19.4" height="0.5" fill="#3a9ab5"/><path d="M13.2 5.7C12.5 5 11.6 5.4 11.3 7L9.6 14.5C9.3 15.7 8.5 16.4 7.3 16" fill="none" stroke="#141414" stroke-width="1.8" stroke-linecap="round"/><path d="M10.2 8.6L13.2 8.6" stroke="#141414" stroke-width="1.1"/></svg><span class="c1"><u>__gmon_start__</u></span><span class="c2"><u>extern</u></span><span class="c3"><i style="transform:scaleX(0.966)">0</i><i style="transform:scaleX(0.966)">0</i><i style="transform:scaleX(0.966)">0</i><i style="transform:scaleX(0.966)">0</i><i style="transform:scaleX(0.966)">0</i><i style="transform:scaleX(0.966)">0</i><i style="transform:scaleX(0.966)">0</i><i style="transform:scaleX(0.966)">0</i><i style="transform:scaleX(0.966)">0</i><i style="transform:scaleX(0.966)">0</i><i style="transform:scaleX(0.966)">6</i><i style="transform:scaleX(0.966)">0</i><i style="transform:scaleX(0.966)">1</i><i style="transform:scaleX(0.966)">0</i><i style="transform:scaleX(0.966)">8</i><i style="transform:scaleX(0.966)">8</i></span><span class="c4"><i style="transform:scaleX(0.966)">0</i><i style="transform:scaleX(0.966)">0</i><i style="transform:scaleX(0.966)">0</i><i style="transform:scaleX(0.966)">0</i><i style="transform:scaleX(0.966)">0</i><i style="transform:scaleX(0.966)">0</i><i style="transform:scaleX(0.966)">0</i><i style="transform:scaleX(0.966)">8</i></span></div>
  </div>
  <div id="vs">
    <svg class="abs" style="left:4px;top:7px" width="11" height="7"><path d="M1 6L5.5 1.5L10 6" fill="none" stroke="#505050" stroke-width="1.8"/></svg>
    <div class="abs" style="left:0;top:54px;width:19px;height:345px;background:#cdcdcd"></div>
    <svg class="abs" style="left:4px;top:406px" width="11" height="7"><path d="M1 1L5.5 5.5L10 1" fill="none" stroke="#505050" stroke-width="1.8"/></svg>
  </div>
  <div id="hs">
    <svg class="abs" style="left:5px;top:4px" width="9" height="11"><path d="M7.5 1L2.5 5.5L7.5 10" fill="none" stroke="#505050" stroke-width="1.8"/></svg>
    <div class="abs" style="left:21px;top:0;width:352px;height:20px;background:#cdcdcd"></div>
    <svg class="abs" style="left:752px;top:5px" width="8" height="10"><path d="M1.5 1L6 5L1.5 9" fill="none" stroke="#505050" stroke-width="1.8"/></svg>
  </div>
  <div id="corner"></div>
</div>
<div id="tabs"><div class="abs" style="left:795px;top:33px;width:4px;height:1px;background:#7a7a7a"></div>
<div class="tab" style="left:798px;width:118px"></div>
<svg class="abs" style="left:810px;top:10px" width="20" height="20" viewBox="0 0 20 20"><rect x="0.5" y="0.5" width="19" height="19" rx="2" fill="#e6e6e6" stroke="#9a9a9a"/><rect x="1" y="1" width="18" height="3.6" fill="#18cdf4"/><rect x="1" y="4.6" width="18" height="0.8" fill="#6a6a6a"/><rect x="3.5" y="5.5" width="13" height="12" fill="#f6f6f6" stroke="#8a8a8a"/><circle cx="6.2" cy="7.9" r="0.9" fill="#3b8ed4"/><circle cx="6.2" cy="10.6" r="0.9" fill="#3b8ed4"/><circle cx="6.2" cy="13" r="0.9" fill="#3b8ed4"/><circle cx="6.2" cy="15.6" r="0.9" fill="#3b8ed4"/><rect x="8" y="7.2" width="6" height="1.4" fill="#666"/><rect x="8" y="9.9" width="6" height="1.4" fill="#222"/><rect x="8" y="12.3" width="6" height="1.4" fill="#666"/><rect x="8" y="14.9" width="6" height="1.4" fill="#222"/></svg>
<div class="abs tt" style="left:836px;top:13px">IDA ...</div>
<svg class="abs" style="left:884px;top:12px" width="18" height="18" viewBox="0 0 18 18"><rect x="0.8" y="0.8" width="16.4" height="16.4" rx="2.2" fill="#c6c6c6" stroke="#b2b2b2" stroke-width="1.6"/><rect x="2.3" y="2.3" width="13.4" height="13.4" fill="none" stroke="#d2d2d2" stroke-width="0.8"/><path d="M5.4 5.4L12.6 12.6M12.6 5.4L5.4 12.6" stroke="#fff" stroke-width="1.7"/></svg>
<div class="tab" style="left:916px;top:5px;height:31px;width:150px;background:#fff;border-color:#d9d9d9"></div>
<svg class="abs" style="left:934px;top:9px" width="20" height="20" viewBox="0 0 20 20"><rect x="0.5" y="0.5" width="19" height="19" rx="2" fill="#e6e6e6" stroke="#9a9a9a"/><rect x="1" y="1" width="18" height="3.6" fill="#18cdf4"/><rect x="1" y="4.6" width="18" height="0.8" fill="#6a6a6a"/><rect x="3.5" y="5.5" width="13" height="12" fill="#f6f6f6" stroke="#8a8a8a"/><circle cx="6.2" cy="7.9" r="0.9" fill="#3b8ed4"/><circle cx="6.2" cy="10.6" r="0.9" fill="#3b8ed4"/><circle cx="6.2" cy="13" r="0.9" fill="#3b8ed4"/><circle cx="6.2" cy="15.6" r="0.9" fill="#3b8ed4"/><rect x="8" y="7.2" width="6" height="1.4" fill="#666"/><rect x="8" y="9.9" width="6" height="1.4" fill="#222"/><rect x="8" y="12.3" width="6" height="1.4" fill="#666"/><rect x="8" y="14.9" width="6" height="1.4" fill="#222"/></svg>
<div class="abs tt" style="left:959px;top:11.5px">Pseudo...</div>
<svg class="abs" style="left:1030px;top:11px" width="18" height="18" viewBox="0 0 18 18"><rect x="0.8" y="0.8" width="16.4" height="16.4" rx="2.2" fill="#ec8b5e" stroke="#e35a4a" stroke-width="1.6"/><rect x="2.3" y="2.3" width="13.4" height="13.4" fill="none" stroke="#f2a585" stroke-width="0.8"/><path d="M5.4 5.4L12.6 12.6M12.6 5.4L5.4 12.6" stroke="#fff" stroke-width="1.7"/></svg>
<div class="tab" style="left:1066px;width:147px;border-left:none"></div>
<svg class="abs" style="left:1080px;top:10px" width="20" height="20" viewBox="0 0 20 20"><rect x="0.5" y="0.5" width="19" height="19" rx="2" fill="#e6e6e6" stroke="#9a9a9a"/><rect x="1" y="1" width="18" height="3.6" fill="#18cdf4"/><rect x="1" y="4.6" width="18" height="0.8" fill="#6a6a6a"/><rect x="3.5" y="5.5" width="13" height="12" fill="#f6f6f6" stroke="#8a8a8a"/><circle cx="6.2" cy="7.9" r="0.9" fill="#3b8ed4"/><circle cx="6.2" cy="10.6" r="0.9" fill="#3b8ed4"/><circle cx="6.2" cy="13" r="0.9" fill="#3b8ed4"/><circle cx="6.2" cy="15.6" r="0.9" fill="#3b8ed4"/><rect x="8" y="7.2" width="6" height="1.4" fill="#666"/><rect x="8" y="9.9" width="6" height="1.4" fill="#222"/><rect x="8" y="12.3" width="6" height="1.4" fill="#666"/><rect x="8" y="14.9" width="6" height="1.4" fill="#222"/></svg>
<div class="abs tt" style="left:1106px;top:13px">Pseudo...</div>
<svg class="abs" style="left:1177px;top:12px" width="18" height="18" viewBox="0 0 18 18"><rect x="0.8" y="0.8" width="16.4" height="16.4" rx="2.2" fill="#c6c6c6" stroke="#b2b2b2" stroke-width="1.6"/><rect x="2.3" y="2.3" width="13.4" height="13.4" fill="none" stroke="#d2d2d2" stroke-width="0.8"/><path d="M5.4 5.4L12.6 12.6M12.6 5.4L5.4 12.6" stroke="#fff" stroke-width="1.7"/></svg>
<div class="tab" style="left:1212px;width:100px;border-right:none"></div>
<svg class="abs" style="left:1228px;top:11px" width="21" height="20" viewBox="0 0 21 20"><path d="M1.5 4C3.5 0.8 8 0 11.5 0.8C14.5 1.3 17 2.5 18.8 4.5C20.2 6.5 19.5 9.5 17.5 11C17 13.5 15.5 16 14 18.5L11 18.5C11 15 10.5 12 10.2 9C9.8 6.2 8 4 5.5 4.3C3.5 4.6 2.2 6 1.6 7.8C1 6.5 1 5 1.5 4Z" fill="#1c1a17"/><path d="M1.6 7.8C2.2 5.4 3.8 4.1 5.8 4.2C8.3 4.4 9.9 6.5 10.1 9.4C10.3 12 10.8 14.3 12 16.2L13.5 18.8L4.2 18.8C4 17 3.6 15.4 3 14C2 12.2 1.3 10 1.6 7.8Z" fill="#d9c193"/><path d="M6 15C8 15.5 10 16 11.5 17L12.8 18.8L5 18.8Z" fill="#e9dab5"/><circle cx="4.3" cy="9.2" r="0.7" fill="#4a3a2a"/><circle cx="7.6" cy="9.2" r="0.7" fill="#4a3a2a"/><ellipse cx="4.2" cy="13.4" rx="1" ry="0.6" fill="#b8503c"/></svg>
<div class="abs tt" style="left:1254px;top:13px">Stack ..</div>
</div>
<div id="rp">
  <div id="gut">
    <div class="ln" style="top:3px">1</div>
    <div class="ln" style="top:23px">2</div>
    <div class="ln" style="top:43px">3</div>
    <div class="ln" style="top:63px">4</div>
    <div class="dot" style="top:47px"></div>
    <div class="dot" style="top:67px"></div>
  </div>
  <div id="gap"></div>
  <div id="ed">
    <div class="abs" style="left:0;top:40px;width:465px;height:20px;background:#e4e4e4"></div>
    <div class="cl" style="top:0"><span style="color:#808080">int sub_40060D</span><span style="color:#000080">()</span></div>
    <div class="cl" style="top:20px;color:#000080">{</div>
    <div class="cl" style="top:40px"><span style="color:#000080">  return </span><span style="color:#0000ff">system</span><span style="color:#000080">(</span><span style="color:#008000">"cat flag.txt"</span><span style="color:#000080">);</span></div>
    <div class="cl" style="top:60px;color:#000080">}</div>
  </div>
</div>
</body></html>
